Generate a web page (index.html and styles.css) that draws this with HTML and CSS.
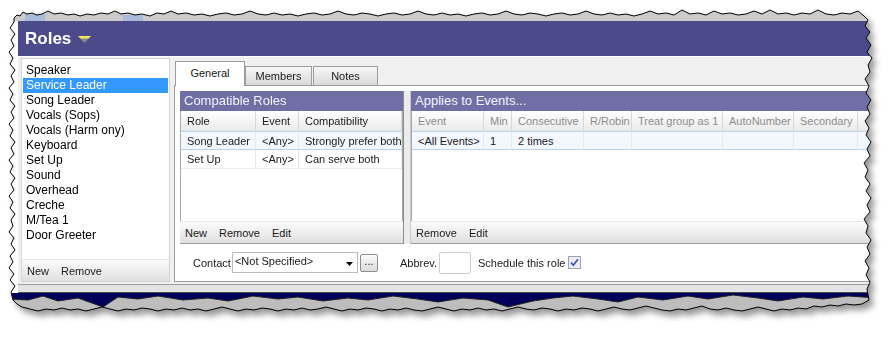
FILE: index.html
```html
<!DOCTYPE html>
<html lang="en">
  <head>
    <meta charset="UTF-8" />
    <title>Roles</title>
    <link rel="stylesheet" href="styles.css">
  </head>
  <body>
    <div class="sheet">
      <div class="torn">
        <div class="app">
          <div class="titlebar">
            <span class="title">Roles</span>
            <svg class="title-arrow" width="13" height="7" viewBox="0 0 13 7">
              <polygon points="0,0 13,0 6.5,7" fill="#8a8a8a"/>
              <polygon points="0,0 13,0 10.5,2.5 2.5,2.5" fill="#f2e65a"/>
            </svg>
          </div>
          <div class="body">
            <div class="rolelist">
              <ul class="roles">
                <li>Speaker</li>
                <li class="selected">Service Leader</li>
                <li>Song Leader</li>
                <li>Vocals (Sops)</li>
                <li>Vocals (Harm ony)</li>
                <li>Keyboard</li>
                <li>Set Up</li>
                <li>Sound</li>
                <li>Overhead</li>
                <li>Creche</li>
                <li>M/Tea 1</li>
                <li>Door Greeter</li>
              </ul>
              <div class="toolbar"><span>New</span><span>Remove</span></div>
            </div>

            <div class="tabs">
              <div class="tabstrip">
                <div class="tab active">General</div>
                <div class="tab members">Members</div>
                <div class="tab notes">Notes</div>
              </div>
              <div class="tabpanel">
                <div class="panes">
                  <div class="pane compat">
                    <div class="pane-head">Compatible Roles</div>
                    <div class="grid">
                      <table>
                        <colgroup><col style="width:75px"><col style="width:43px"><col></colgroup>
                        <tr><th>Role</th><th>Event</th><th>Compatibility</th></tr>
                        <tr class="current"><td>Song Leader</td><td>&lt;Any&gt;</td><td>Strongly prefer both</td></tr>
                        <tr><td>Set Up</td><td>&lt;Any&gt;</td><td>Can serve both</td></tr>
                      </table>
                    </div>
                    <div class="toolbar"><span>New</span><span>Remove</span><span>Edit</span></div>
                  </div>
                  <div class="splitter"></div>
                  <div class="pane applies">
                    <div class="pane-head">Applies to Events...</div>
                    <div class="grid">
                      <table>
                        <colgroup>
                          <col style="width:72px"><col style="width:28px"><col style="width:72px"><col style="width:48px">
                          <col style="width:91px"><col style="width:71px"><col style="width:64px"><col>
                        </colgroup>
                        <tr class="dim"><th>Event</th><th>Min</th><th>Consecutive</th><th>R/Robin</th><th>Treat group as 1</th><th>AutoNumber</th><th>Secondary</th><th></th></tr>
                        <tr class="current"><td>&lt;All Events&gt;</td><td>1</td><td>2 times</td><td></td><td></td><td></td><td></td><td></td></tr>
                      </table>
                    </div>
                    <div class="toolbar"><span>Remove</span><span>Edit</span></div>
                  </div>
                </div>
                <div class="fields">
                  <span>Contact</span>
                  <div class="combo">
                    <span>&lt;Not Specified&gt;</span>
                    <svg class="combo-arrow" width="7" height="4" viewBox="0 0 7 4"><polygon points="0,0 7,0 3.5,4" fill="#000"/></svg>
                  </div>
                  <div class="dots">...</div>
                  <span class="abbrev-label">Abbrev.</span>
                  <div class="abbrev"></div>
                  <span class="schedule">Schedule this role</span>
                  <svg class="check" width="13" height="13" viewBox="0 0 13 13">
                    <rect x="0.5" y="0.5" width="12" height="12" fill="#eceef3" stroke="#9ba1ad"/>
                    <path d="M3 6.5 L5.3 9.2 L10 3.3" fill="none" stroke="#3350b4" stroke-width="1.6"/>
                  </svg>
                </div>
              </div>
            </div>
          </div>
          <div class="app-foot"></div>
        </div>
        <svg class="tail" width="870" height="25" viewBox="0 0 870 25">
          <rect width="870" height="25" fill="#00005a"/>
          <polygon points="0,25 0,6 20,7 35,3 50,8 70,5 95,14 110,4 130,6 150,3 175,7 200,5 220,8 245,3 270,6 290,4 315,8 340,5 360,7 385,3 410,6 430,9 455,5 480,7 500,14 525,8 545,5 565,3 590,6 610,9 630,4 655,7 680,3 700,6 725,2 750,5 770,8 795,4 815,6 840,3 870,5 870,25" fill="#bdbdbd" stroke="#222" stroke-width="1"/>
        </svg>
      </div>

      <!-- torn paper outline, also used as the clip shape -->
      <svg class="edge" width="870" height="310" viewBox="0 0 870 310">
        <defs>
          <polygon id="edge-shape" points="6,10 9,7 12,8 15,4 19,6 24,5 29,7 34,6 40,3 46,6 53,5 60,7 66,6 72,8 79,6 86,7 93,5 100,6 107,3 113,6 120,5 127,7 134,6 142,8 149,5 156,6 163,3 170,6 178,5 186,7 194,6 202,8 210,6 218,5 226,7 234,6 242,3 250,6 258,7 266,5 274,7 282,6 290,8 298,6 306,5 314,7 322,6 330,3 338,6 346,7 354,5 362,6 370,8 378,6 386,5 394,7 402,6 410,3 418,6 426,7 434,5 442,7 450,6 458,8 466,6 474,5 482,7 490,6 498,3 506,6 514,7 522,5 530,6 538,8 546,6 554,5 562,7 570,6 578,3 586,6 594,7 602,5 610,7 618,6 626,8 634,6 642,3 650,6 658,5 666,7 674,2 682,6 690,5 698,7 706,3 714,6 722,5 730,7 738,6 746,3 754,6 762,2 770,6 778,5 786,7 794,5 802,6 810,2 818,6 826,7 834,5 842,6 850,3 856,8 860,12 857,18 862,24 858,30 863,37 859,44 864,50 860,57 862,64 857,71 861,78 858,85 863,92 859,99 862,106 857,113 861,120 858,127 863,134 859,141 862,148 856,155 860,162 857,169 862,176 858,183 863,190 859,197 862,204 856,211 860,218 858,225 863,232 859,239 862,246 857,253 861,260 858,267 862,274 859,281 861,292 854,296 846,297 838,296 830,298 822,297 814,299 806,298 798,301 790,300 782,302 774,301 766,303 758,301 750,299 742,301 734,303 726,302 718,300 710,302 702,301 694,298 686,300 678,302 670,301 662,303 654,302 646,300 638,298 630,300 622,302 614,301 606,299 598,301 590,303 582,301 574,300 566,302 558,301 550,303 542,301 534,300 526,302 518,301 510,299 502,301 494,303 486,301 478,302 470,300 462,302 454,301 446,303 438,301 430,299 422,301 414,303 406,302 398,300 390,302 382,301 374,303 366,301 358,300 350,302 342,301 334,303 326,301 318,299 310,301 302,302 294,300 286,302 278,301 270,303 262,301 254,300 246,302 238,301 230,303 222,301 214,299 206,301 198,303 190,301 182,302 174,300 166,302 158,301 150,303 142,301 134,300 126,302 118,301 110,303 102,301 94,299 86,301 78,303 70,301 62,302 54,300 46,302 38,301 30,303 22,301 14,299 9,296 5,292 3,284 7,278 2,272 6,266 1,260 5,254 2,248 7,242 3,236 6,230 1,224 5,218 3,212 7,206 2,200 5,194 1,188 6,182 3,176 7,170 2,164 5,158 1,152 6,146 3,140 7,134 2,128 5,122 1,116 6,110 3,104 7,98 2,92 5,86 1,80 6,74 3,68 7,62 2,56 5,50 1,44 6,38 3,32 7,26 2,20 6,14"/>
          <clipPath id="torn"><use href="#edge-shape"/></clipPath>
        </defs>
        <use href="#edge-shape" class="edge-line"/>
      </svg>
    </div>
  </body>
</html>
```

FILE: styles.css
```css
body {
  margin: 0;
  padding: 8px;
  background-color: #fff;
  font-family: "Liberation Sans", Arial, sans-serif;
  font-size: 11px;
  color: #1a1a1a;
}
.sheet {
  position: relative;
  width: 870px;
  height: 310px;
  filter: drop-shadow(4px 5px 3px rgba(0, 0, 0, 0.4));
}
.torn {
  width: 870px;
  height: 310px;
  box-sizing: border-box;
  padding: 13px 0 0 10px;
  overflow: hidden;
  clip-path: url(#torn);
  background:
    linear-gradient(#a9b9d9, #a9b9d9) 17px 6px / 20px 7px no-repeat,
    linear-gradient(#a9b9d9, #a9b9d9) 115px 7px / 20px 6px no-repeat,
    linear-gradient(#cbcbcb, #cbcbcb) 0 0 / 100% 13px no-repeat,
    #fff;
}
.edge {
  position: absolute;
  left: 0;
  top: 0;
  pointer-events: none;
}
.edge-line {
  fill: none;
  stroke: #000;
  stroke-width: 1;
}
.tail {
  display: block;
  margin-left: -10px;
}

.app {
  width: 860px;
}
.titlebar {
  height: 35px;
  display: flex;
  align-items: center;
  padding-left: 7px;
  background-color: #4b4b8b;
}
.title {
  color: #fff;
  font-weight: bold;
  font-size: 17px;
}
.title-arrow {
  margin-left: 7px;
  margin-top: 2px;
}
.body {
  display: flex;
  background-color: #f0f0f0;
  border-top: 1px solid #fff;
  padding: 1px 0 2px 3px;
}
.app-foot {
  height: 7px;
  background-color: #e4e4e4;
  border-top: 1px solid #a0a0a0;
  border-bottom: 1px solid #4a4a4a;
}

/* left list of roles */
.rolelist {
  width: 149px;
  height: 224px;
  box-sizing: border-box;
  display: flex;
  flex-direction: column;
  background-color: #fff;
  border: 1px solid #d4d4d4;
}
.roles {
  flex: 1;
  list-style: none;
  margin: 0;
  padding: 4px 1px 0;
  font-size: 12px;
  color: #000;
}
.roles li {
  line-height: 15px;
  padding-left: 3px;
}
.roles .selected {
  background-color: #3399ff;
  color: #fff;
}
.toolbar {
  height: 22px;
  box-sizing: border-box;
  display: flex;
  align-items: center;
  gap: 12px;
  padding-left: 5px;
  background: linear-gradient(#fbfbfb, #e0e0e0);
  border-top: 1px solid #e8e8e8;
}

/* tabs */
.tabs {
  flex: 1;
  height: 224px;
  margin-left: 4px;
  display: flex;
  flex-direction: column;
}
.tabstrip {
  height: 27px;
  display: flex;
  align-items: flex-end;
  padding-left: 1px;
}
.tab {
  height: 19px;
  box-sizing: border-box;
  display: flex;
  align-items: center;
  justify-content: center;
  border: 1px solid #9c9c9c;
  border-bottom: none;
  background: linear-gradient(#f7f7f7, #d9d9d9);
}
.tab.active {
  width: 70px;
  height: 25px;
  margin-bottom: -1px;
  padding-bottom: 2px;
  background: #fff;
  position: relative;
  z-index: 1;
}
.tab.members {
  width: 67px;
}
.tab.notes {
  width: 65px;
  margin-left: 1px;
}
.tabpanel {
  flex: 1;
  display: flex;
  flex-direction: column;
  padding: 5px 0 0 5px;
  background-color: #fff;
  border: 1px solid #9c9c9c;
  border-right: none;
}
.panes {
  height: 153px;
  display: flex;
}
.pane {
  display: flex;
  flex-direction: column;
}
.compat {
  width: 223px;
}
.applies {
  flex: 1;
}
.pane-head {
  height: 20px;
  line-height: 20px;
  padding-left: 4px;
  font-size: 13px;
  color: #f4f4ff;
  background-color: #6f6fa5;
}
.grid {
  flex: 1;
  overflow: hidden;
  background-color: #fff;
  border-left: 1px solid #a8a8a8;
  border-right: 1px solid #a8a8a8;
}
.applies .grid {
  border-right: none;
}
.pane .toolbar {
  height: 23px;
  border-bottom: 1px solid #a0a0a0;
}
.splitter {
  width: 8px;
  box-sizing: border-box;
  background-color: #ececec;
  border-left: 1px solid #8c8c8c;
  border-right: 1px solid #c8c8c8;
}

table {
  width: 100%;
  table-layout: fixed;
  border-collapse: separate;
  border-spacing: 0;
}
th,
td {
  padding: 0 6px;
  text-align: left;
  white-space: nowrap;
  overflow: hidden;
}
th {
  height: 19px;
  font-weight: normal;
  background: linear-gradient(#fff, #ebebeb);
  border-right: 1px solid #d8d8d8;
  border-bottom: 1px solid #e4e4e4;
}
td {
  height: 18px;
  border-right: 1px solid #e8e8e8;
  border-bottom: 1px solid #ececec;
}
tr.dim th {
  color: #8c8c8c;
}
tr.current td {
  background-color: #f3f8ff;
  border-top: 1px solid #b9d3f3;
  border-bottom: 1px solid #b9d3f3;
  height: 17px;
}

/* fields under the grids */
.fields {
  flex: 1;
  display: flex;
  align-items: center;
  padding-left: 13px;
}
.combo {
  width: 126px;
  height: 21px;
  box-sizing: border-box;
  margin-left: 1px;
  display: flex;
  justify-content: space-between;
  padding: 2px 4px 0 2px;
  background-color: #fff;
  border: 1px solid #bcbcbc;
}
.combo-arrow {
  margin-top: 7px;
}
.dots {
  width: 18px;
  height: 18px;
  box-sizing: border-box;
  margin-left: 2px;
  display: flex;
  justify-content: center;
  line-height: 12px;
  border: 1px solid #8e8e8e;
  border-radius: 2px;
  background: linear-gradient(#fafafa, #dcdcdc);
}
.abbrev-label {
  margin-left: 22px;
}
.abbrev {
  width: 32px;
  height: 22px;
  box-sizing: border-box;
  margin-left: 2px;
  border: 1px solid #cdcdcd;
  border-radius: 2px;
}
.schedule {
  margin-left: 7px;
}
.check {
  margin-left: 3px;
}
```
